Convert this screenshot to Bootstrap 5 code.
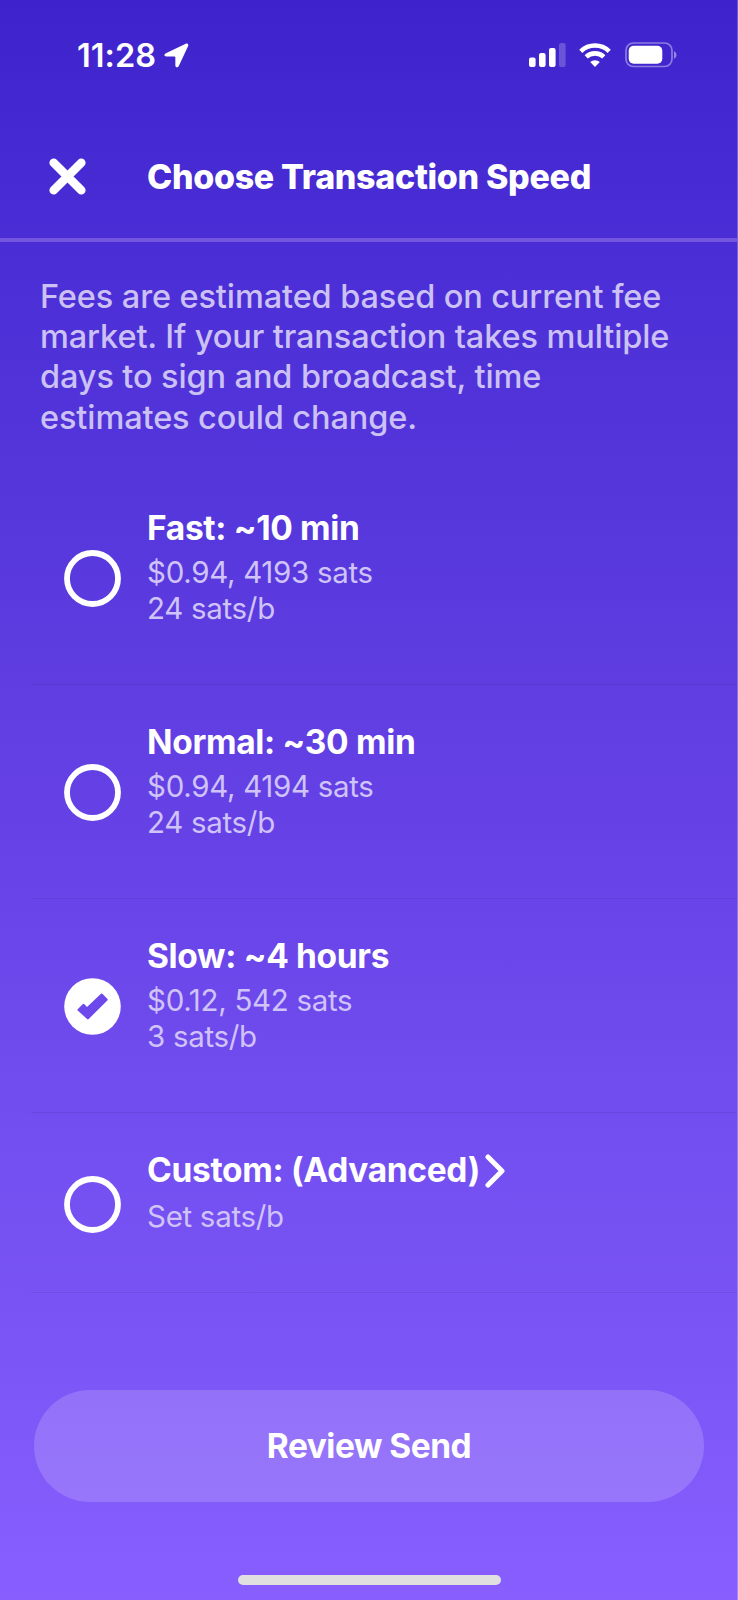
<!DOCTYPE html>
<html lang="en">
<head>
<meta charset="utf-8">
<meta name="viewport" content="width=device-width, initial-scale=1">
<title>Choose Transaction Speed</title>
<link href="https://cdn.jsdelivr.net/npm/bootstrap@5.3.0/dist/css/bootstrap.min.css" rel="stylesheet">
<style>
  body { font-family: Inter, "Liberation Sans", sans-serif; color: #fff; background: #6742e6; }
  .screen { height: 1600px; border-right: 1px solid rgba(255,255,255,.25);
    background: linear-gradient(180deg, #3e23cc 0, #4a2dd5 240px, #5436db 480px, #603ee1 700px, #6944e8 900px, #724ef0 1120px, #7953f4 1300px, #835bfb 1500px, #885eff 1600px) border-box; }
  .statusbar { height: 110px; padding: 0 60px 0 77px; }
  .clock { font-size: 32.5px; font-weight: 600; line-height: 40px; letter-spacing: .05px; padding-top: 2px; }
  .arrow { margin-left: 8px; }
  .wifi { margin-left: 12px; }
  .battery { margin-left: 14px; }
  .topbar { height: 132px; padding: 6px 0 0 49px; border-bottom: 4px solid #7256dd; }
  .topbar h1 { font-size: 34px; font-weight: 800; line-height: 40px; margin-left: 60px; letter-spacing: -.32px; }
  .blurb { font-size: 32.5px; font-weight: 500; line-height: 40.2px; padding: 35px 40px 0; color: #cbc1f4; letter-spacing: -.11px; }
  .options { padding: 33.500px 0 0 31px; }
  .option { height: 214px; border-bottom: 1px solid rgba(50,30,110,.13); padding: 34.500px 0 0 33px; }
  .option.short { height: 180px; }
  .radio-dot { width: 57px; height: 57px; margin-top: 44.500px; }
  .option.short .radio-dot { margin-top: 28px; }
  .option-text { margin-left: 26px; }
  .option h2 { font-size: 33.5px; font-weight: 700; line-height: 44px; letter-spacing: -.33px; }
  .option p { font-size: 29.5px; line-height: 35.5px; color: #cfc3f7; letter-spacing: -.3px; margin-top: 5.500px; }
  .option.short p { padding-top: 2px; }
  .chevron { margin: 2px 0 0 5px; }
  .review { height: 112px; margin: 97px 33px 0 34px; border-radius: 56px; background: rgba(255,255,255,.165); color: #fff; font-size: 33.5px; font-weight: 700; letter-spacing: -.5px; }
  .homebar { width: 263px; height: 10px; background: #e0e0e0; margin: 73px 0 0 1px; }
</style>
</head>
<body>
<main class="screen d-flex flex-column overflow-hidden">
  <div class="statusbar d-flex align-items-center justify-content-between">
    <div class="d-flex align-items-center">
      <span class="clock">11:28</span>
      <svg class="arrow" width="25" height="25" viewBox="0 0 26 26" fill="#fff"><path d="M22.6.8 2 10.600C-.4 11.800 0 14 2.600 14H11q.8 0 .8.8V23.200C11.800 25.800 14.400 26 15.400 24L25 3.400C25.900 1.400 24.500 0 22.600.8Z"/></svg>
    </div>
    <div class="d-flex align-items-center">
      <svg width="38" height="26" viewBox="0 0 38 26" fill="#fff"><rect x="0" y="15.500" width="6.600" height="9.500" rx="2"/><rect x="10" y="11" width="6.600" height="14" rx="2"/><rect x="20" y="6" width="6.600" height="19" rx="2"/><rect x="30" y="1" width="6.600" height="24" rx="2" opacity=".22"/></svg>
      <svg class="wifi" width="32" height="26" viewBox="0 0 32 26" fill="none" stroke="#fff" stroke-width="4.600"><path d="M1.800 9.300a20.400 20.400 0 0 1 28.400 0"/><path d="M7.200 14.900a12.700 12.700 0 0 1 17.600 0"/><path fill="#fff" stroke="none" d="M16 25l-4.800-4.900a6.900 6.900 0 0 1 9.600 0Z"/></svg>
      <svg class="battery" width="52" height="26" viewBox="0 0 52 26"><rect x="1" y="1" width="46" height="23.500" rx="7.500" fill="none" stroke="#fff" stroke-opacity=".4" stroke-width="1.700"/><rect x="3.700" y="3.700" width="33.600" height="18" rx="5" fill="#fff"/><path d="M49 9v8q2.600-1.400 2.600-4T49 9Z" fill="#fff" opacity=".45"/></svg>
    </div>
  </div>
  <header class="topbar d-flex align-items-center flex-shrink-0">
    <svg width="38" height="38" viewBox="0 0 38 38" stroke="#fff" stroke-width="8.600" stroke-linecap="round"><path d="M4.700 4.700 32.300 32.300M32.300 4.700 4.700 32.300"/></svg>
    <h1 class="mb-0">Choose Transaction Speed</h1>
  </header>
  <p class="blurb mb-0">Fees are estimated based on current fee<br>market. If your transaction takes multiple<br>days to sign and broadcast, time<br>estimates could change.</p>
  <section class="options">
    <div class="option d-flex">
      <svg class="radio-dot flex-shrink-0" viewBox="0 0 57 57"><circle cx="28.500" cy="28.500" r="25.500" fill="none" stroke="#fff" stroke-width="5.800"/></svg>
      <div class="option-text"><h2 class="mb-0">Fast: ~10 min</h2><p class="mb-0">$0.94, 4193 sats<br>24 sats/b</p></div>
    </div>
    <div class="option d-flex">
      <svg class="radio-dot flex-shrink-0" viewBox="0 0 57 57"><circle cx="28.500" cy="28.500" r="25.500" fill="none" stroke="#fff" stroke-width="5.800"/></svg>
      <div class="option-text"><h2 class="mb-0">Normal: ~30 min</h2><p class="mb-0">$0.94, 4194 sats<br>24 sats/b</p></div>
    </div>
    <div class="option d-flex">
      <svg class="radio-dot flex-shrink-0" viewBox="0 0 57 57"><circle cx="28.500" cy="28.500" r="28.300" fill="#fff"/><path d="M13.700 31.200 18.600 26.200Q19.500 25.300 20.400 26.200L23 28.900 36.700 16Q37.700 15.100 38.600 16L43.300 20.700Q44.200 21.600 43.300 22.500L25 40.700Q23.900 41.800 22.800 40.700L13.700 32.500Q13 31.900 13.700 31.200Z" fill="#6d48eb"/></svg>
      <div class="option-text"><h2 class="mb-0">Slow: ~4 hours</h2><p class="mb-0">$0.12, 542 sats<br>3 sats/b</p></div>
    </div>
    <div class="option short d-flex">
      <svg class="radio-dot flex-shrink-0" viewBox="0 0 57 57"><circle cx="28.500" cy="28.500" r="25.500" fill="none" stroke="#fff" stroke-width="5.800"/></svg>
      <div class="option-text"><h2 class="mb-0 d-flex align-items-center">Custom: (Advanced)<svg class="chevron" width="20" height="34" viewBox="0 0 20 34" fill="none" stroke="#fff" stroke-width="5" stroke-linecap="round" stroke-linejoin="round"><path d="M3 3 17 17 3 31"/></svg></h2><p class="mb-0">Set sats/b</p></div>
    </div>
  </section>
  <button class="review btn border-0 flex-shrink-0" type="button">Review Send</button>
  <div class="homebar rounded-pill align-self-center flex-shrink-0"></div>
</main>
<script src="https://cdn.jsdelivr.net/npm/bootstrap@5.3.0/dist/js/bootstrap.bundle.min.js"></script>
</body>
</html>
